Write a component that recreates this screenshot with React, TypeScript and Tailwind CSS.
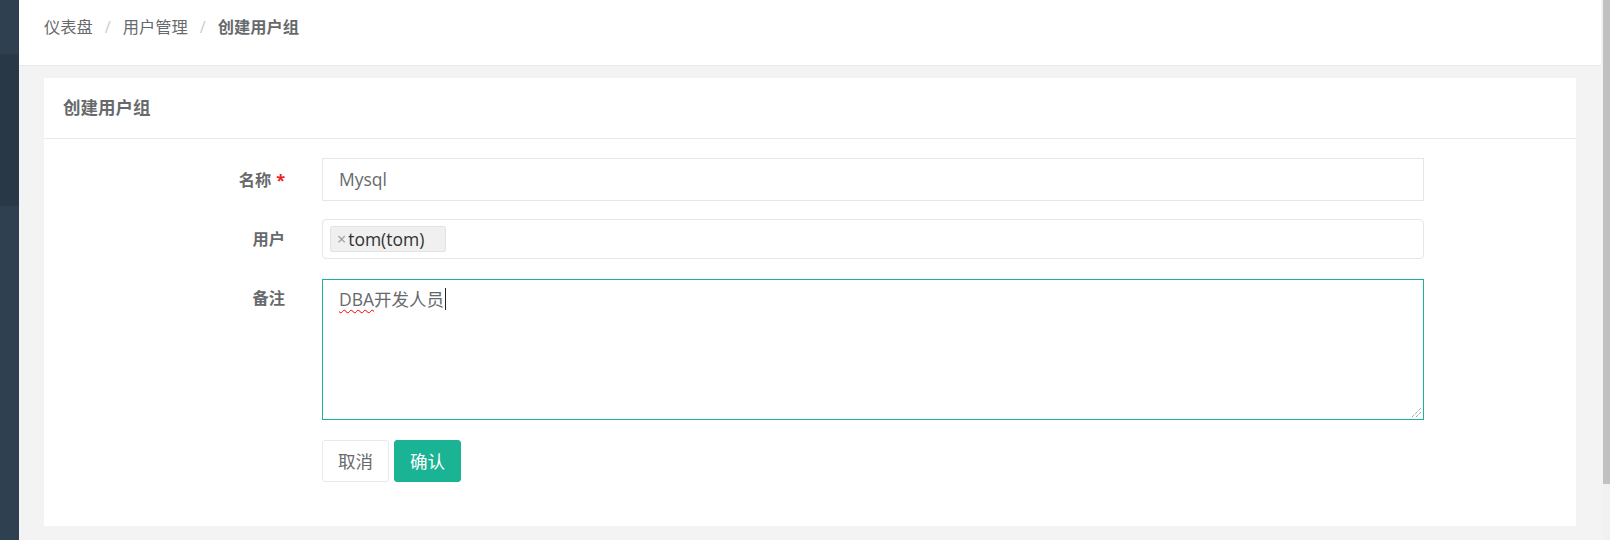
import React from "react";

export default function App() {
  return (
    <div className="flex h-[540px] w-[1610px] overflow-hidden bg-[#f3f3f4] font-['Open_Sans','Noto_Sans_CJK_SC',sans-serif] text-[#676a6c]">
      {/* sidebar */}
      <aside className="flex w-[19px] shrink-0 flex-col">
        <div className="h-[54px] bg-[#2f4050]" />
        <div className="h-[152px] bg-[#293846]" />
        <div className="flex-1 bg-[#2f4050]" />
      </aside>

      {/* main */}
      <main className="flex min-w-0 flex-1 flex-col">
        <div className="mr-[2px] h-[66px] border-b border-[#e7eaec] bg-white pl-[25px] pt-[16px]">
          <nav className="flex items-center text-[16.25px] leading-[22px]">
            <span>仪表盘</span>
            <span className="px-[12px] text-[#cccccc]">/</span>
            <span>用户管理</span>
            <span className="px-[12px] text-[#cccccc]">/</span>
            <span className="font-bold">创建用户组</span>
          </nav>
        </div>

        <div className="pl-[25px] pr-[27px] pt-[12px]">
          <section className="bg-white">
            <div className="h-[61px] border-b border-[#e7eaec] pl-[19px] pt-[17px]">
              <h5 className="text-[17.5px] font-bold leading-[24px]">创建用户组</h5>
            </div>

            <div className="pb-[44px] pt-[19px]">
              {/* 名称 */}
              <div className="flex items-center">
                <label className="w-[241px] text-right text-[16.25px] font-bold leading-[24px]">
                  名称<span className="ml-[5px] text-[#ed1c24]">*</span>
                </label>
                <div className="ml-[37px] flex h-[43px] w-[1102px] items-center border border-[#e5e6e7] pl-[16px] text-[17.5px] text-[#676a6c]">
                  Mysql
                </div>
              </div>

              {/* 用户 */}
              <div className="mt-[18px] flex items-center">
                <label className="w-[241px] text-right text-[16.25px] font-bold leading-[24px]">
                  用户
                </label>
                <div className="ml-[37px] flex h-[40px] w-[1102px] items-center rounded-[4px] border border-[#e5e6e7] pl-[7px]">
                  <div className="flex h-[26px] w-[116px] items-center rounded-[2px] border border-[#e3e3e3] bg-[#f0f0f0] pl-[6px] text-[17.5px] leading-[24px] text-[#333333]">
                    <span className="mr-[2px] text-[16px] text-[#999999]">×</span>
                    <span>tom(tom)</span>
                  </div>
                </div>
              </div>

              {/* 备注 */}
              <div className="mt-[20px] flex items-start">
                <label className="w-[241px] pt-[7px] text-right text-[16.25px] font-bold leading-[24px]">
                  备注
                </label>
                <div className="relative ml-[37px] h-[141px] w-[1102px] border border-[#1ab394] pl-[16px] pt-[4px] text-[17.5px] leading-[24px] text-[#676a6c]">
                  <span className="underline decoration-[#ff0000] decoration-wavy decoration-1 underline-offset-[3px]">
                    DBA
                  </span>
                  <span>开发人员</span>
                  <span className="ml-[1px] inline-block h-[22px] w-[1px] translate-y-[4px] bg-[#222222] align-baseline" />
                  <svg
                    className="absolute bottom-[1px] right-[1px]"
                    width="11"
                    height="11"
                    viewBox="0 0 11 11"
                  >
                    <path d="M1 10 L10 1" stroke="#777" strokeWidth="1" strokeDasharray="1 1" />
                    <path d="M5 10 L10 5" stroke="#777" strokeWidth="1" strokeDasharray="1 1" />
                  </svg>
                </div>
              </div>

              {/* buttons */}
              <div className="ml-[278px] mt-[20px] flex gap-[5px]">
                <button className="flex h-[42px] w-[67px] items-center justify-center rounded-[3px] border border-[#e7eaec] bg-white text-[17.5px] text-[#676a6c]">
                  取消
                </button>
                <button className="flex h-[42px] w-[67px] items-center justify-center rounded-[3px] border border-[#1ab394] bg-[#1ab394] text-[17.5px] text-white">
                  确认
                </button>
              </div>
            </div>
          </section>
        </div>
      </main>

      {/* scrollbar */}
      <div className="flex w-[7px] shrink-0 flex-col bg-[#f1f1f1]">
        <div className="h-[484px] bg-[#c1c1c1]" />
      </div>
    </div>
  );
}
